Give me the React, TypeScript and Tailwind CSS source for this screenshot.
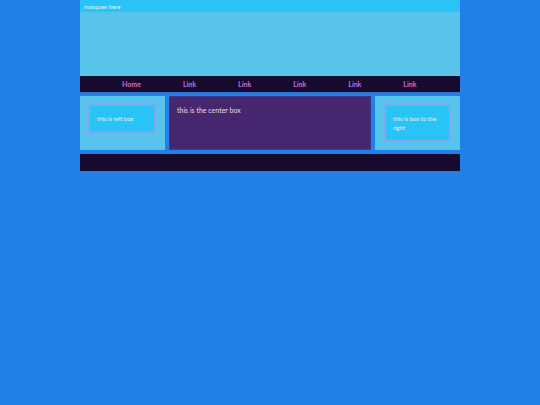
const links = ["Home", "Link", "Link", "Link", "Link", "Link"];

const App = () => {
  return (
    <div
      className="min-h-[405px] w-full bg-[#2180e8]"
      style={{ fontFamily: "Lato, 'Open Sans', sans-serif" }}
    >
      <div className="mx-auto flex w-[380px] flex-col">
        {/* marquee */}
        <div className="flex h-[12px] items-center bg-[#29c4f5] px-[4px] pt-[2px] text-[6px] leading-none text-[#e4f6ff]">
          marquee here
        </div>

        {/* header */}
        <div className="h-[64px] bg-[#58c4ec]" />

        {/* nav */}
        <nav className="h-[17px] border-b border-[#2f6fc9] bg-[#170a2f]">
          <ul className="flex h-full items-center gap-[42px] pl-[42px] pt-[1px] text-[7px] font-bold text-[#c86be0]">
            {links.map((l, i) => (
              <li key={i} className="cursor-pointer">
                {l}
              </li>
            ))}
          </ul>
        </nav>

        {/* content row */}
        <div className="mt-[3px] flex gap-[4px]">
          <div className="w-[85px] bg-[#58c4ec] py-[8px] pl-[8px] pr-[9px]">
            <div className="border-2 border-[#80a8ee] bg-[#29c4f5] px-[7px] py-[8px] text-[6px] leading-[9px] text-[#e6eef8]">
              this is left box
            </div>
          </div>

          <div className="flex-1 border border-[#3d3a8c] bg-[#45266f] px-[7px] pt-[9px] text-[7px] leading-[9px] text-[#e2dcef]">
            this is the center box
          </div>

          <div className="w-[85px] bg-[#58c4ec] p-[9px] py-[8px]">
            <div className="border-2 border-[#80a8ee] bg-[#29c4f5] px-[7px] py-[8px] text-[6px] leading-[9px] text-[#e6eef8]">
              this is box to the right
            </div>
          </div>
        </div>

        {/* footer */}
        <div className="mt-[4px] h-[17px] bg-[#170a2f]" />
      </div>
    </div>
  );
};

export default App;
